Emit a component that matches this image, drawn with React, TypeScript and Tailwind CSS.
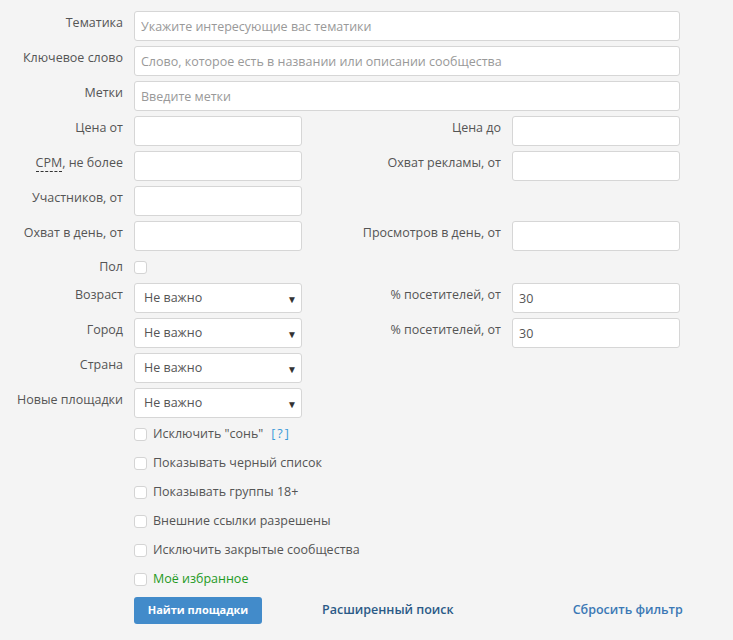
import React from "react";

const font = { fontFamily: '"Open Sans", "Noto Sans", sans-serif' };

const inputCls =
  "h-[30px] bg-white border border-[#d6d6d6] rounded-[3px] px-[6px] text-[12.5px] text-[#555] placeholder:text-[#999] outline-none";

function Label({ children, w = "w-[123px]" }: { children: React.ReactNode; w?: string }) {
  return (
    <div className={`${w} shrink-0 mr-[11px] text-right text-[12.5px] text-[#555] pt-[3px] leading-[18px]`}>
      {children}
    </div>
  );
}

function Box() {
  return <span className="inline-block w-[13px] h-[13px] border border-[#d4d4d4] rounded-[3px] bg-white shrink-0" />;
}

function Select() {
  return (
    <div className="relative w-[168px] h-[30px] bg-white border border-[#d6d6d6] rounded-[3px] flex items-center pl-[9px] text-[12.5px] text-[#555]">
      Не важно
      <span className="absolute right-[4px] top-[8px] text-[10px] text-[#333]">▼</span>
    </div>
  );
}

export default function App() {
  const half = (label: string, node?: React.ReactNode) => (
    <>
      <Label>{label}</Label>
      {node ?? <input className={`${inputCls} w-[168px]`} />}
    </>
  );
  const right = (label: string, node?: React.ReactNode) => (
    <>
      <Label w="w-[199px]">{label}</Label>
      {node ?? <input className={`${inputCls} w-[168px]`} />}
    </>
  );
  const checks: [string, React.ReactNode?][] = [
    ["Исключить \"сонь\"", <span className="ml-[8px] tracking-[2px] text-[#3a9ad9]">[?]</span>],
    ["Показывать черный список"],
    ["Показывать группы 18+"],
    ["Внешние ссылки разрешены"],
    ["Исключить закрытые сообщества"],
  ];

  return (
    <div style={font} className="min-h-[640px] w-[733px] bg-[#f4f4f4] pt-[11px]">
      <div className="flex flex-col gap-[5px]">
        <div className="flex">
          <Label>Тематика</Label>
          <input className={`${inputCls} w-[546px]`} placeholder="Укажите интересующие вас тематики" />
        </div>
        <div className="flex">
          <Label>Ключевое слово</Label>
          <input className={`${inputCls} w-[546px]`} placeholder="Слово, которое есть в названии или описании сообщества" />
        </div>
        <div className="flex">
          <Label>Метки</Label>
          <input className={`${inputCls} w-[546px]`} placeholder="Введите метки" />
        </div>
        <div className="flex">
          {half("Цена от")}
          {right("Цена до")}
        </div>
        <div className="flex">
          <Label>
            <span className="border-b border-dashed border-[#333]">CPM</span>, не более
          </Label>
          <input className={`${inputCls} w-[168px]`} />
          {right("Охват рекламы, от")}
        </div>
        <div className="flex">{half("Участников, от")}</div>
        <div className="flex">
          {half("Охват в день, от")}
          {right("Просмотров в день, от")}
        </div>
        <div className="flex h-[22px] items-center">
          <div className="w-[123px] mr-[11px] text-right text-[12.5px] text-[#555]">Пол</div>
          <Box />
        </div>
        <div className="flex">
          {half("Возраст", <Select />)}
          {right("% посетителей, от", <input className={`${inputCls} w-[168px]`} defaultValue="30" />)}
        </div>
        <div className="flex">
          {half("Город", <Select />)}
          {right("% посетителей, от", <input className={`${inputCls} w-[168px]`} defaultValue="30" />)}
        </div>
        <div className="flex">{half("Страна", <Select />)}</div>
        <div className="flex">{half("Новые площадки", <Select />)}</div>
      </div>

      <div className="pl-[134px] pt-[2px]">
        {checks.map(([t, extra], i) => (
          <div key={i} className="flex items-center h-[29px] text-[12.5px] text-[#555]">
            <Box />
            <span className="ml-[6px]">{t}</span>
            {extra}
          </div>
        ))}
        <div className="flex items-center h-[29px] text-[12.5px] text-[#1e9a1e]">
          <Box />
          <span className="ml-[6px]">Моё избранное</span>
        </div>
        <div className="flex items-center mt-[3px]">
          <button className="w-[128px] h-[27px] rounded-[3px] bg-[#428bca] text-white text-[11px] font-bold">
            Найти площадки
          </button>
          <a className="ml-[60px] text-[12.5px] font-semibold text-[#2b5a87]">Расширенный поиск</a>
          <a className="ml-[119px] text-[12.5px] font-semibold text-[#3a78b5]">Сбросить фильтр</a>
        </div>
      </div>
    </div>
  );
}
